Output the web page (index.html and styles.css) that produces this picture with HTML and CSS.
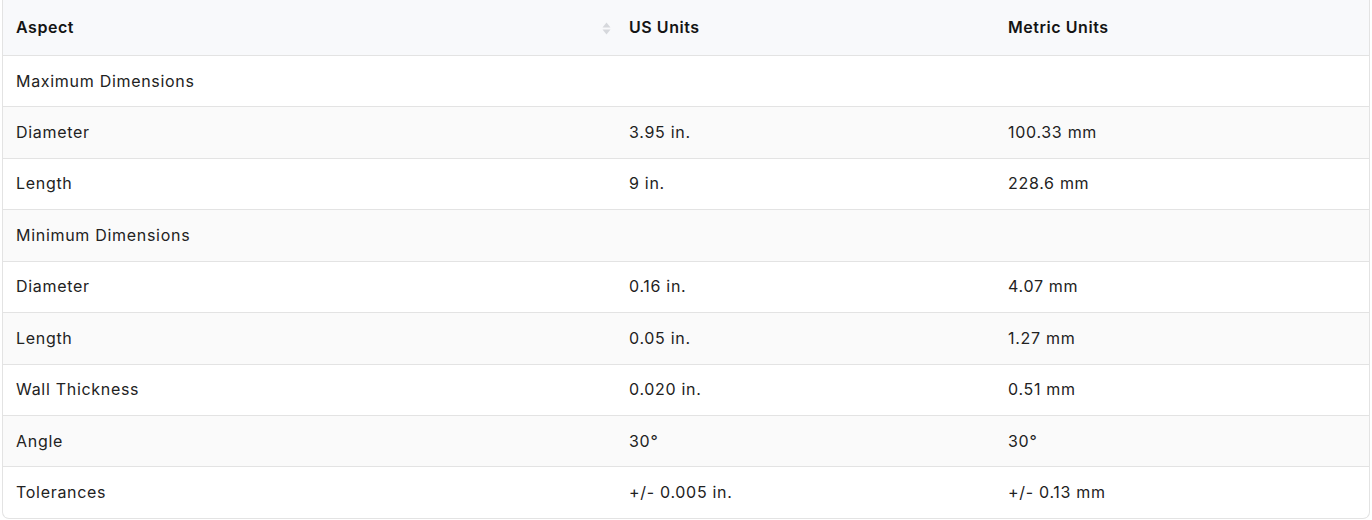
FILE: index.html
```html
<!DOCTYPE html>
<html lang="en">
<head>
<meta charset="utf-8">
<title>Dimensions</title>
<link rel="stylesheet" href="styles.css">
</head>
<body>
<div class="table-wrap">
  <table class="spec">
    <colgroup>
      <col class="c1">
      <col class="c2">
      <col class="c3">
    </colgroup>
    <thead>
      <tr>
        <th class="sortable">Aspect
          <span class="sort-icon">
            <svg width="9" height="13" viewBox="0 0 9 13"><path d="M4.5 0.5 L8.5 5.5 H0.5 Z" fill="#d6d8dc"/><path d="M4.5 12.5 L8.5 7.5 H0.5 Z" fill="#d6d8dc"/></svg>
          </span>
        </th>
        <th>US Units</th>
        <th>Metric Units</th>
      </tr>
    </thead>
    <tbody>
      <tr><td>Maximum Dimensions</td><td></td><td></td></tr>
      <tr><td>Diameter</td><td>3.95 in.</td><td>100.33 mm</td></tr>
      <tr><td>Length</td><td>9 in.</td><td>228.6 mm</td></tr>
      <tr><td>Minimum Dimensions</td><td></td><td></td></tr>
      <tr><td>Diameter</td><td>0.16 in.</td><td>4.07 mm</td></tr>
      <tr><td>Length</td><td>0.05 in.</td><td>1.27 mm</td></tr>
      <tr><td>Wall Thickness</td><td>0.020 in.</td><td>0.51 mm</td></tr>
      <tr><td>Angle</td><td>30°</td><td>30°</td></tr>
      <tr><td>Tolerances</td><td>+/- 0.005 in.</td><td>+/- 0.13 mm</td></tr>
    </tbody>
  </table>
</div>
</body>
</html>
```
FILE: styles.css
```css
html, body {
  margin: 0;
  padding: 0;
  background: #ffffff;
}
body {
  font-family: Inter, "Open Sans", "Liberation Sans", sans-serif;
  font-size: 16px;
  letter-spacing: 0.7px;
  color: #222222;
}
.table-wrap {
  margin: 0 2px;
  border: 1px solid #e3e3e3;
  border-top: none;
  border-radius: 0 0 7px 7px;
  overflow: hidden;
}
.spec {
  width: 100%;
  border-collapse: separate;
  border-spacing: 0;
  table-layout: fixed;
}
.c1 { width: 613px; }
.c2 { width: 379px; }
.c3 { width: 374px; }
.spec th {
  text-align: left;
  font-weight: 600;
  letter-spacing: 0.55px;
  color: #141414;
  background: #f8f9fb;
  padding: 18px 13px;
  line-height: 19px;
  border-bottom: 1px solid #e3e3e3;
}
.sortable {
  position: relative;
}
.sort-icon {
  position: absolute;
  right: 5px;
  top: 22px;
  display: block;
  line-height: 0;
}
.spec td {
  padding: 15.55px 13px;
  line-height: 19.33px;
  border-bottom: 1px solid #e3e3e3;
  color: #222222;
}
.spec tbody tr:nth-child(even) td {
  background: #fafafa;
}
.spec tbody tr:last-child td {
  border-bottom: none;
}
```
